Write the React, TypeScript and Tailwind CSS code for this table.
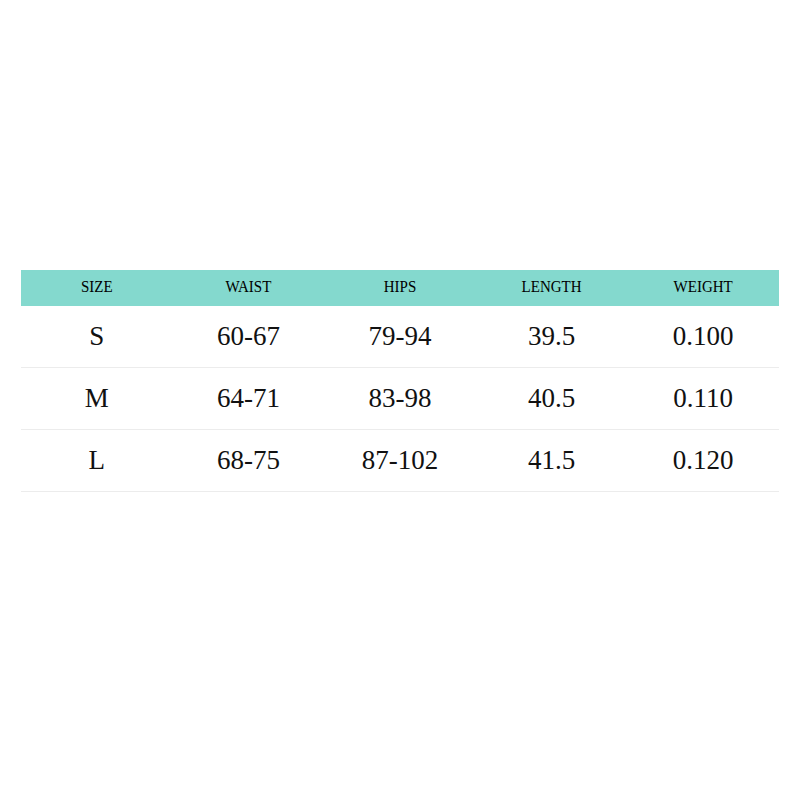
import React from 'react';

const columns = ['SIZE', 'WAIST', 'HIPS', 'LENGTH', 'WEIGHT'];

const rows = [
  ['S', '60-67', '79-94', '39.5', '0.100'],
  ['M', '64-71', '83-98', '40.5', '0.110'],
  ['L', '68-75', '87-102', '41.5', '0.120'],
];

const App: React.FC = () => {
  return (
    <div
      className="w-[800px] h-[800px] bg-white pt-[270px] px-[21px] text-[#111]"
      style={{ fontFamily: '"Liberation Serif", "Times New Roman", serif' }}
    >
      <div className="w-[758px]">
        <div className="grid grid-cols-5 h-[36px] items-center bg-[#84d9ce]">
          {columns.map((col) => (
            <div key={col} className="text-center text-[15px] leading-none scale-y-[1.1] -translate-y-[1px] text-black">
              {col}
            </div>
          ))}
        </div>

        {rows.map((row) => (
          <div key={row[0]} className="grid grid-cols-5 h-[62px] items-center border-b border-[#ececec]">
            {row.map((cell, i) => (
              <div key={i} className="text-center text-[27px] leading-none">
                {cell}
              </div>
            ))}
          </div>
        ))}
      </div>
    </div>
  );
};

export default App;
